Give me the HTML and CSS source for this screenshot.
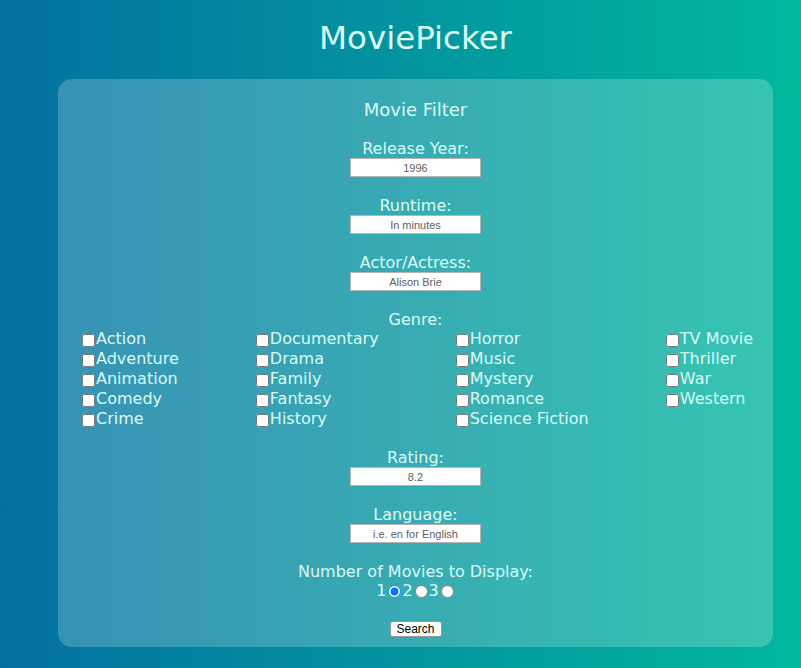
FILE: index.html
```html
<!DOCTYPE html>
<html>
<head>
<meta charset="utf-8">
<title>MoviePicker</title>
<link rel="stylesheet" href="styles.css">
</head>
<body>
<div class="page">
  <h1 class="title">MoviePicker</h1>
  <form class="card">
    <h2 class="card-title">Movie Filter</h2>
    <div class="field">
      <label class="field-label">Release Year:</label>
      <input class="text-input" type="text" placeholder="1996">
    </div>
    <div class="field">
      <label class="field-label">Runtime:</label>
      <input class="text-input" type="text" placeholder="In minutes">
    </div>
    <div class="field">
      <label class="field-label">Actor/Actress:</label>
      <input class="text-input" type="text" placeholder="Alison Brie">
    </div>
    <div class="field">
      <label class="field-label">Genre:</label>
      <div class="genres">
        <div class="genre-col">
          <label class="genre"><input type="checkbox" class="cb">Action</label>
          <label class="genre"><input type="checkbox" class="cb">Adventure</label>
          <label class="genre"><input type="checkbox" class="cb">Animation</label>
          <label class="genre"><input type="checkbox" class="cb">Comedy</label>
          <label class="genre"><input type="checkbox" class="cb">Crime</label>
        </div>
        <div class="genre-col">
          <label class="genre"><input type="checkbox" class="cb">Documentary</label>
          <label class="genre"><input type="checkbox" class="cb">Drama</label>
          <label class="genre"><input type="checkbox" class="cb">Family</label>
          <label class="genre"><input type="checkbox" class="cb">Fantasy</label>
          <label class="genre"><input type="checkbox" class="cb">History</label>
        </div>
        <div class="genre-col">
          <label class="genre"><input type="checkbox" class="cb">Horror</label>
          <label class="genre"><input type="checkbox" class="cb">Music</label>
          <label class="genre"><input type="checkbox" class="cb">Mystery</label>
          <label class="genre"><input type="checkbox" class="cb">Romance</label>
          <label class="genre"><input type="checkbox" class="cb">Science Fiction</label>
        </div>
        <div class="genre-col">
          <label class="genre"><input type="checkbox" class="cb">TV Movie</label>
          <label class="genre"><input type="checkbox" class="cb">Thriller</label>
          <label class="genre"><input type="checkbox" class="cb">War</label>
          <label class="genre"><input type="checkbox" class="cb">Western</label>
        </div>
      </div>
    </div>
    <div class="field field-rating">
      <label class="field-label">Rating:</label>
      <input class="text-input" type="text" placeholder="8.2">
    </div>
    <div class="field">
      <label class="field-label">Language:</label>
      <input class="text-input" type="text" placeholder="i.e. en for English">
    </div>
    <div class="field">
      <label class="field-label">Number of Movies to Display:</label>
      <div class="radios">1<input type="radio" name="n" class="rb" checked>2<input type="radio" name="n" class="rb">3<input type="radio" name="n" class="rb"></div>
    </div>
    <div class="actions">
      <button type="button" class="search-btn">Search</button>
    </div>
  </form>
</div>
</body>
</html>
```
FILE: styles.css
```css
html, body {
  margin: 0;
  padding: 0;
}
body {
  min-height: 668px;
  background: linear-gradient(to right, #0270a1 0%, #03949f 50%, #00b89d 100%);
  font-family: "DejaVu Sans", "Open Sans", sans-serif;
  color: #d8fbf6;
}
.page {
  width: 715px;
  margin-left: 58px;
  padding-top: 18px;
  padding-bottom: 21px;
}
.title {
  margin: 0;
  font-size: 32.5px;
  line-height: 40px;
  font-weight: normal;
  text-align: center;
}
.card {
  margin-top: 21px;
  background: rgba(255, 255, 255, 0.21);
  border-radius: 14px;
  padding: 19px 20px 10px;
  display: flex;
  flex-direction: column;
  align-items: center;
}
.card-title {
  margin: 0;
  font-size: 18px;
  line-height: 24px;
  font-weight: normal;
}
.field {
  margin-top: 16px;
  display: flex;
  flex-direction: column;
  align-items: center;
  width: 100%;
}
.field + .field {
  margin-top: 18px;
}
.field-rating {
  margin-top: 18px;
}
.field-label {
  font-size: 16px;
  line-height: 20px;
  padding-top: 1px;
  margin-bottom: -1px;
}
.text-input {
  box-sizing: border-box;
  width: 131px;
  height: 19px;
  margin: 0;
  padding: 0 2px;
  border: 1px solid #b4b4b4;
  background: #fff;
  font-family: "Liberation Sans", Arial, sans-serif;
  font-size: 11px;
  text-align: center;
  color: #555;
}
.text-input::placeholder {
  color: #606060;
}
.genres {
  display: flex;
  justify-content: space-between;
  width: 100%;
}
.genre-col {
  display: flex;
  flex-direction: column;
}
.genre {
  display: flex;
  align-items: center;
  font-size: 16px;
  line-height: 20px;
  white-space: nowrap;
}
.cb {
  width: 13px;
  height: 13px;
  margin: 3px 1px 0 4px;
}
.radios {
  display: flex;
  align-items: center;
  font-size: 16px;
  line-height: 20px;
  height: 20px;
}
.rb {
  width: 13px;
  height: 13px;
  margin: 1px 1px 0 2px;
}
.actions {
  margin-top: 20px;
  display: flex;
}
.search-btn {
  box-sizing: border-box;
  width: 52px;
  height: 16px;
  padding: 0;
  border: 1px solid #999;
  border-radius: 3px;
  background: #fff;
  font-family: "Liberation Sans", Arial, sans-serif;
  font-size: 12px;
  line-height: 14px;
  color: #000;
}
```
